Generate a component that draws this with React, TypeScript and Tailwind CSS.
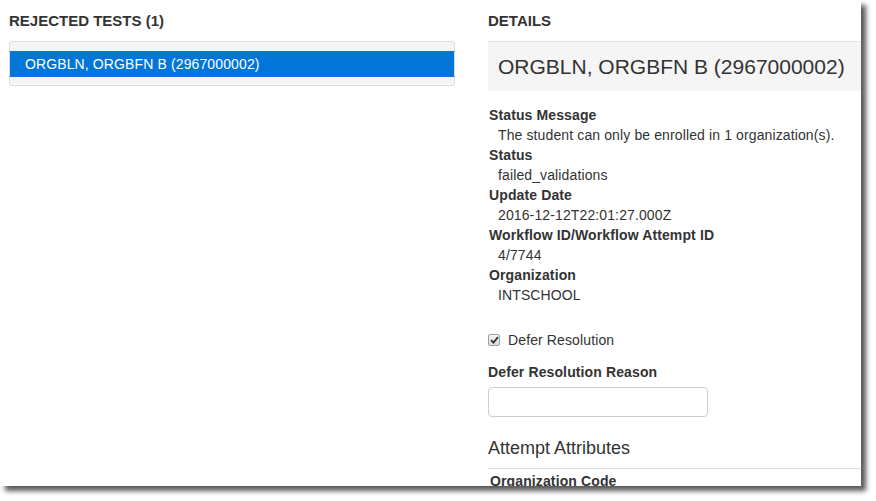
import React from "react";

const rows: [string, string][] = [
  ["Status Message", "The student can only be enrolled in 1 organization(s)."],
  ["Status", "failed_validations"],
  ["Update Date", "2016-12-12T22:01:27.000Z"],
  ["Workflow ID/Workflow Attempt ID", "4/7744"],
  ["Organization", "INTSCHOOL"],
];

export default function App() {
  return (
    <div className="w-[876px] h-[501px] bg-white overflow-hidden">
      <div
        className="w-[861px] h-[486px] bg-white overflow-hidden shadow-[5px_5px_5px_rgba(0,0,0,0.65)] text-[#333] text-[14px] leading-[20px] tracking-[0.12px]"
        style={{ fontFamily: '"Liberation Sans", Arial, sans-serif' }}
      >
        <div className="flex pl-[9px] pt-[11px] gap-[33px]">
          <div className="w-[446px] shrink-0">
            <h2 className="text-[15px] leading-[20px] font-bold uppercase tracking-normal">Rejected Tests (1)</h2>
            <div className="mt-[10px] border border-[#ddd] rounded-[3px] bg-[#f5f5f5] pt-[9px] pb-[8px]">
              <div className="bg-[#0275d8] text-white h-[26px] leading-[26px] pl-[15px]">
                ORGBLN, ORGBFN B (2967000002)
              </div>
            </div>
          </div>
          <div className="w-[420px] shrink-0">
            <h2 className="text-[15px] leading-[20px] font-bold uppercase tracking-normal">Details</h2>
            <div className="mt-[10px] bg-[#f5f5f5] border-t border-[#e3e3e3] h-[50px] pl-[10px] flex items-center text-[21px] tracking-normal">
              ORGBLN, ORGBFN B (2967000002)
            </div>
            <div className="mt-[14px]">
              {rows.map(([k, v]) => (
                <div key={k}>
                  <div className="font-bold pl-[1px]">{k}</div>
                  <div className="pl-[10px]">{v}</div>
                </div>
              ))}
            </div>
            <div className="mt-[25px] flex items-center h-[20px]">
              <span className="w-[12px] h-[12px] rounded-[2px] border border-[#a0a0a0] bg-gradient-to-b from-[#f4f4f4] to-[#dcdcdc] flex items-center justify-center">
                <svg width="9" height="8" viewBox="0 0 9 8">
                  <path d="M1 4.2 L3.4 6.6 L8 1.2" stroke="#333" strokeWidth="1.8" fill="none" />
                </svg>
              </span>
              <span className="ml-[8px]">Defer Resolution</span>
            </div>
            <div className="mt-[12px] font-bold">Defer Resolution Reason</div>
            <div className="mt-[5px] w-[220px] h-[30px] border border-[#ccc] rounded-[4px] bg-white" />
            <div className="mt-[20px] text-[18px] leading-[22px] tracking-normal">Attempt Attributes</div>
            <div className="mt-[9px] border-t border-[#ddd] pl-[2px] pt-[2px] font-bold">Organization Code</div>
          </div>
        </div>
      </div>
    </div>
  );
}
